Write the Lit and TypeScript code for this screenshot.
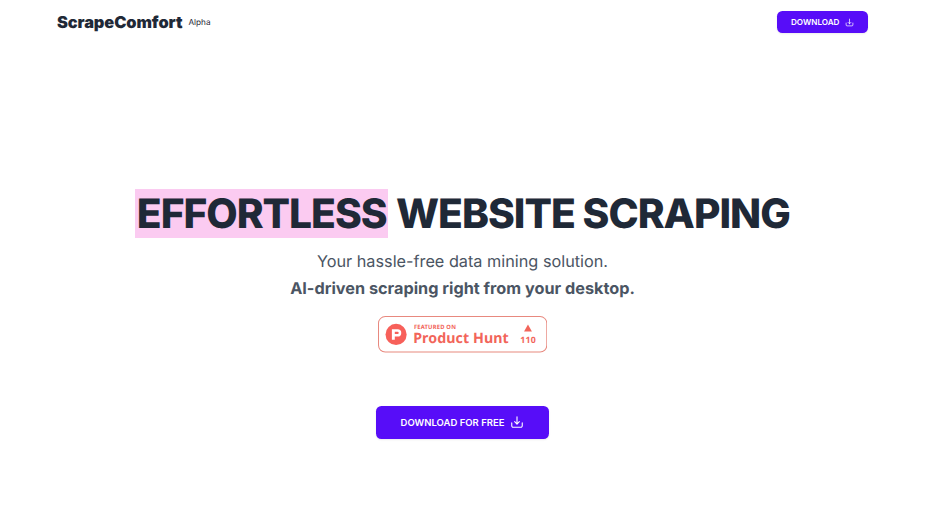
import { LitElement, html, css } from 'lit';
import { customElement, property } from 'lit/decorators.js';

@customElement('download-icon')
export class DownloadIcon extends LitElement {
  static styles = css`
    :host {
      display: block;
      flex: none;
    }
    svg {
      display: block;
      width: 100%;
      height: 100%;
    }
  `;

  render() {
    return html`
      <svg viewBox="0 0 24 24" fill="none" stroke="currentColor" stroke-width="1.9" stroke-linecap="round" stroke-linejoin="round">
        <path d="M3 13.5v5A2.5 2.5 0 0 0 5.5 21h13a2.5 2.5 0 0 0 2.5-2.5v-5M16 11.5l-4 4-4-4m4 4V3"/>
      </svg>
    `;
  }
}

@customElement('product-hunt-badge')
export class ProductHuntBadge extends LitElement {
  static styles = css`
    :host {
      display: block;
    }
    svg {
      display: block;
      width: 169.3px;
      height: 36.6px;
    }
    text {
      font-family: "Noto Sans", "Open Sans", sans-serif;
      font-weight: 700;
      fill: #f2655a;
      text-rendering: geometricPrecision;
    }
    .label {
      font-size: 8.6px;
    }
    .name {
      font-size: 21px;
    }
    .votes {
      font-size: 13px;
      text-anchor: middle;
    }
  `;

  @property({ type: Number }) votes = 0;

  render() {
    return html`
      <svg viewBox="0 0 250 54">
        <rect x="0.75" y="0.75" width="248.5" height="52.5" rx="10" fill="#fff" stroke="#e8897f" stroke-width="1.5"/>
        <circle cx="26.7" cy="27.2" r="15.6" fill="#f7605a"/>
        <path fill="#fff" fill-rule="evenodd" d="M20.5 19.5h8.4a5.45 5.45 0 0 1 0 10.9h-4.1v4.6h-4.3zM24.8 23.4v3.2H29a1.6 1.6 0 0 0 0-3.2z"/>
        <text class="label" x="53" y="19.5" textLength="62">FEATURED ON</text>
        <text class="name" x="52" y="39.5" textLength="141">Product Hunt</text>
        <path fill="#f2655a" d="M221.5 12.5 227.3 23h-11.6z"/>
        <text class="votes" x="221.5" y="40" textLength="23">${this.votes}</text>
      </svg>
    `;
  }
}

@customElement('app-root')
export class AppRoot extends LitElement {
  static styles = css`
    :host {
      display: flex;
      flex-direction: column;
      box-sizing: border-box;
      height: 520px;
      background: #fff;
      color: #1f2937;
      font-family: Inter, sans-serif;
      text-rendering: geometricPrecision;
    }
    header {
      display: flex;
      align-items: center;
      justify-content: space-between;
      box-sizing: border-box;
      height: 44.5px;
      padding: 0 57px;
    }
    .brand {
      display: flex;
      align-items: center;
      gap: 6px;
    }
    .logo {
      font-size: 16.4px;
      font-weight: 900;
      letter-spacing: -0.1px;
    }
    .stage {
      font-size: 8.2px;
    }
    button {
      display: flex;
      align-items: center;
      justify-content: center;
      border: none;
      background: #570df8;
      color: #fff;
      font-family: inherit;
      font-weight: 600;
      padding: 0;
      cursor: pointer;
      box-shadow: 0 1px 2px rgba(0, 0, 0, 0.08);
    }
    .small {
      width: 91px;
      height: 22px;
      gap: 5.5px;
      border-radius: 5.4px;
      font-size: 8.15px;
    }
    .small download-icon {
      width: 9px;
      height: 9px;
    }
    main {
      display: flex;
      flex-direction: column;
      align-items: center;
      padding-top: 144.8px;
    }
    h1 {
      margin: 0;
      font-size: 40.7px;
      line-height: 49px;
      font-weight: 800;
      letter-spacing: -0.025em;
      white-space: nowrap;
    }
    .highlight {
      background: #fbcbf1;
      padding: 0 1.6px;
    }
    .tagline {
      margin: 9.7px 0 0;
      color: #4b5563;
      font-size: 16.25px;
      line-height: 27px;
      text-align: center;
    }
    .tagline strong {
      font-weight: 700;
    }
    product-hunt-badge {
      margin-top: 14px;
    }
    .large {
      width: 173.5px;
      height: 32.5px;
      margin-top: 53.6px;
      gap: 6px;
      border-radius: 5.4px;
      font-size: 9.5px;
    }
    .large download-icon {
      width: 14px;
      height: 14px;
    }
  `;

  render() {
    return html`
      <header>
        <div class="brand">
          <span class="logo">ScrapeComfort</span>
          <span class="stage">Alpha</span>
        </div>
        <button class="small">DOWNLOAD <download-icon></download-icon></button>
      </header>
      <main>
        <h1><span class="highlight">EFFORTLESS</span> WEBSITE SCRAPING</h1>
        <p class="tagline">
          Your hassle-free data mining solution.<br>
          <strong>AI-driven scraping right from your desktop.</strong>
        </p>
        <product-hunt-badge votes="110"></product-hunt-badge>
        <button class="large">DOWNLOAD FOR FREE <download-icon></download-icon></button>
      </main>
    `;
  }
}
